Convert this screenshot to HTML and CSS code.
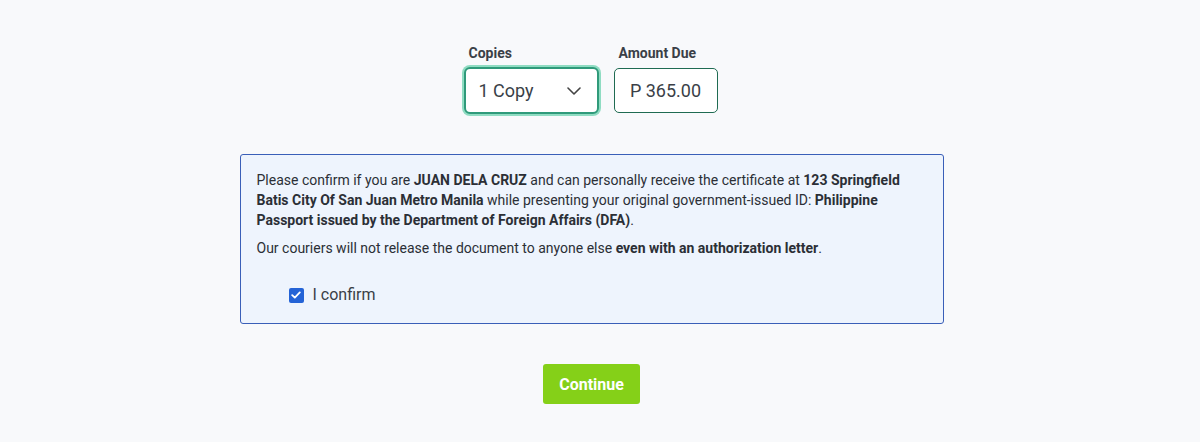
FILE: index.html
```html
<!DOCTYPE html>
<html>
<head>
<meta charset="utf-8">
<link rel="stylesheet" href="styles.css">
</head>
<body>
<div class="page">
  <div class="fields">
    <div class="field">
      <div class="label">Copies</div>
      <div class="select">
        <span>1 Copy</span>
        <svg class="chev" width="14" height="8" viewBox="0 0 14 8"><path d="M1 1l6 6 6-6" fill="none" stroke="#444" stroke-width="1.6" stroke-linecap="round" stroke-linejoin="round"/></svg>
      </div>
    </div>
    <div class="field">
      <div class="label">Amount Due</div>
      <div class="amount">P 365.00</div>
    </div>
  </div>
  <div class="notice">
    <p>Please confirm if you are <b>JUAN DELA CRUZ</b> and can personally receive the certificate at <b>123 Springfield Batis City Of San Juan Metro Manila</b> while presenting your original government-issued ID: <b>Philippine Passport issued by the Department of Foreign Affairs (DFA)</b>.</p>
    <p>Our couriers will not release the document to anyone else <b>even with an authorization letter</b>.</p>
    <label class="confirm">
      <span class="box"><svg width="10" height="8" viewBox="0 0 10 8"><path d="M1.2 4.2l2.6 2.4L8.8 1.4" fill="none" stroke="#fff" stroke-width="1.8" stroke-linecap="round" stroke-linejoin="round"/></svg></span>
      <span>I confirm</span>
    </label>
  </div>
  <button class="continue">Continue</button>
</div>
</body>
</html>
```
FILE: styles.css
```css
* { box-sizing: border-box; }
html, body { margin: 0; padding: 0; }
body {
  background: #f8f9fb;
  font-family: Roboto, "Noto Sans", sans-serif;
  color: #2b2f36;
}
.page {
  display: flex;
  flex-direction: column;
  align-items: center;
  padding-top: 44px;
  padding-right: 17px;
}
.fields {
  display: flex;
  gap: 15px;
  margin-right: 2px;
}
.field {
  display: flex;
  flex-direction: column;
}
.label {
  font-size: 14px;
  font-weight: 700;
  color: #3a3f47;
  line-height: 18px;
  margin-left: 5px;
  margin-bottom: 6px;
}
.select {
  width: 135px;
  height: 47px;
  border: 2px solid #2f9a7a;
  box-shadow: 0 0 0 2px #8fdcc2;
  border-radius: 6px;
  background: #fff;
  display: flex;
  align-items: center;
  justify-content: space-between;
  padding: 0 16px 0 13px;
  font-size: 18px;
  color: #3a3f47;
  margin-top: -1px;
}
.amount {
  width: 104px;
  height: 45px;
  border: 1px solid #1f6b52;
  border-radius: 5px;
  background: #fff;
  display: flex;
  align-items: center;
  justify-content: center;
  font-size: 18px;
  color: #3a3f47;
}
.notice {
  margin-top: 40px;
  width: 704px;
  height: 170px;
  border: 1px solid #3a5fb8;
  border-radius: 3px;
  background: #eef4fd;
  padding: 15px 16px;
  font-size: 14px;
  line-height: 20px;
  color: #2b2f36;
}
.notice p { margin: 0 0 8px; }
.notice b { font-weight: 700; }
.confirm {
  display: flex;
  align-items: center;
  gap: 9px;
  margin-top: 27px;
  margin-left: 32px;
  font-size: 16px;
  color: #3a3f47;
}
.box {
  width: 15px;
  height: 15px;
  background: #2463d6;
  border-radius: 2px;
  display: flex;
  align-items: center;
  justify-content: center;
}
.continue {
  margin-top: 40px;
  width: 97px;
  height: 40px;
  border: none;
  border-radius: 3px;
  background: #85d018;
  color: #fff;
  font-family: Roboto, sans-serif;
  font-size: 16px;
  font-weight: 700;
}
```
